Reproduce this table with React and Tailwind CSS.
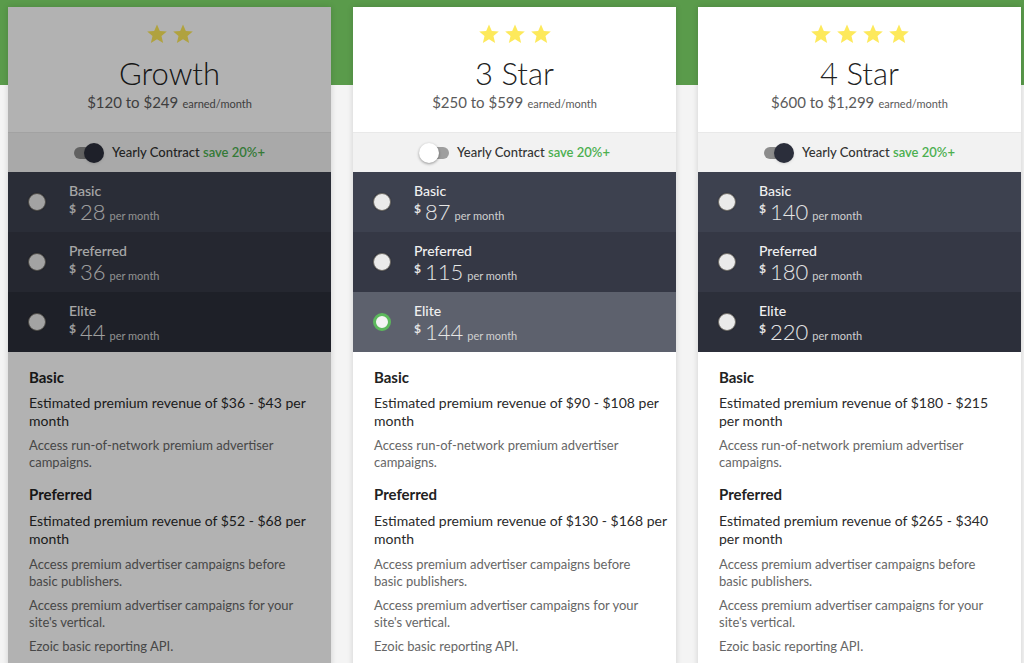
const plans = [
  {
    stars: 2,
    title: "Growth",
    range: "$120 to $249",
    yearly: true,
    disabled: true,
    prices: ["28", "36", "44"],
    selected: -1,
    basicRev: ["Estimated premium revenue of $36 - $43 per", "month"],
    prefRev: ["Estimated premium revenue of $52 - $68 per", "month"],
  },
  {
    stars: 3,
    title: "3 Star",
    range: "$250 to $599",
    yearly: false,
    prices: ["87", "115", "144"],
    selected: 2,
    basicRev: ["Estimated premium revenue of $90 - $108 per", "month"],
    prefRev: ["Estimated premium revenue of $130 - $168 per", "month"],
  },
  {
    stars: 4,
    title: "4 Star",
    range: "$600 to $1,299",
    yearly: true,
    prices: ["140", "180", "220"],
    selected: -1,
    basicRev: ["Estimated premium revenue of $180 - $215", "per month"],
    prefRev: ["Estimated premium revenue of $265 - $340", "per month"],
  },
];

const tiers = ["Basic", "Preferred", "Elite"];
const rowBg = ["bg-[#3d414f]", "bg-[#353845]", "bg-[#2c2f3a]"];

function Star() {
  return (
    <svg width="22" height="22" viewBox="0 0 24 24">
      <path
        d="M12 1.5l3.1 7.1 7.6.6-5.8 5 1.8 7.5L12 17.7l-6.7 4 1.8-7.5-5.8-5 7.6-.6z"
        fill="#fde95b"
      />
    </svg>
  );
}

function Toggle({ on }) {
  if (on) {
    return (
      <div className="relative w-[30px] h-[20px] flex items-center">
        <div className="w-[26px] h-[12px] rounded-full bg-[#8c8c8c]" />
        <div className="absolute right-0 top-0 w-[20px] h-[20px] rounded-full bg-[#2b2e3b] shadow" />
      </div>
    );
  }
  return (
    <div className="relative w-[30px] h-[20px] flex items-center justify-end">
      <div className="w-[26px] h-[12px] rounded-full bg-[#9e9e9e]" />
      <div className="absolute left-0 top-0 w-[20px] h-[20px] rounded-full bg-white shadow-[0_1px_3px_rgba(0,0,0,0.4)]" />
    </div>
  );
}

function Radio({ checked }) {
  if (checked) {
    return (
      <div className="w-[18px] h-[18px] rounded-full border-[3px] border-[#5cb85c] bg-[#f4f4f4]" />
    );
  }
  return (
    <div className="w-[18px] h-[18px] rounded-full bg-[#eaeaea] border border-[#6d6a66] shadow-[0_0_1px_rgba(0,0,0,0.6)]" />
  );
}

function Lines({ lines, className }) {
  return (
    <p className={className}>
      {lines.map((l) => (
        <span key={l} className="block whitespace-nowrap">
          {l}
        </span>
      ))}
    </p>
  );
}

function Card({ plan }) {
  return (
    <div className="relative w-[323px] shrink-0 bg-white shadow-[0_0_6px_rgba(0,0,0,0.15)] overflow-hidden">
      <div className="h-[125px] flex flex-col items-center pt-[16px]">
        <div className="flex gap-[4px] h-[22px]">
          {Array.from({ length: plan.stars }).map((_, i) => (
            <Star key={i} />
          ))}
        </div>
        <div className="mt-[9px] text-[31px] leading-[38px] font-light text-[#222]">
          {plan.title}
        </div>
        <div className="leading-[20px] text-[#5a5a5a]">
          <span className="text-[15px]">{plan.range}</span>{" "}
          <span className="text-[11px]">earned/month</span>
        </div>
      </div>

      <div className="h-[40px] bg-[#f2f2f2] border-t border-[#e9e9e9] flex items-center justify-center gap-[8px]">
        <Toggle on={plan.yearly} />
        <span className="text-[13px] font-medium text-[#333] pt-[1px]">
          Yearly Contract{" "}
          <span className="text-[#4caf50] font-semibold">save 20%+</span>
        </span>
      </div>

      {tiers.map((t, i) => (
        <div
          key={t}
          className={`h-[60px] flex items-center pl-[20px] gap-[23px] ${
            plan.selected === i ? "bg-[#5d616d]" : rowBg[i]
          }`}
        >
          <Radio checked={plan.selected === i} />
          <div className="flex flex-col pt-[5px]">
            <span className="text-[14px] leading-[18px] font-medium text-[#f0f0f0]">
              {t}
            </span>
            <span className="leading-[24px] text-[#e6e6e6] flex items-baseline">
              <span className="text-[12px] font-bold self-start leading-[18px] mr-[4px]">$</span>
              <span className="text-[22px] font-light">{plan.prices[i]}</span>
              <span className="text-[11px] ml-[4px] text-[#d0d0d0]">per month</span>
            </span>
          </div>
        </div>
      ))}

      <div className="px-[21px] pt-[15px] pb-10 text-[#2a2a2a]">
        <h3 className="text-[15px] leading-[20px] font-bold text-[#222]">Basic</h3>
        <Lines lines={plan.basicRev} className="mt-[7px] text-[14px] leading-[18px]" />
        <Lines
          lines={["Access run-of-network premium advertiser", "campaigns."]}
          className="mt-[7px] text-[13px] leading-[17px] text-[#666]"
        />
        <h3 className="mt-[13px] text-[15px] leading-[20px] font-bold text-[#222]">Preferred</h3>
        <Lines lines={plan.prefRev} className="mt-[8px] text-[14px] leading-[18px]" />
        <Lines
          lines={["Access premium advertiser campaigns before", "basic publishers."]}
          className="mt-[8px] text-[13px] leading-[17px] text-[#666]"
        />
        <Lines
          lines={["Access premium advertiser campaigns for your", "site's vertical."]}
          className="mt-[7px] text-[13px] leading-[17px] text-[#666]"
        />
        <p className="mt-[7px] text-[13px] leading-[17px] text-[#666]">
          Ezoic basic reporting API.
        </p>
      </div>

      {plan.disabled && (
        <div className="absolute inset-0 bg-black/30 pointer-events-none" />
      )}
    </div>
  );
}

export default function App() {
  return (
    <div className="min-h-screen h-[663px] overflow-hidden font-[Lato,sans-serif] bg-[linear-gradient(to_bottom,#5a9b4b_85px,#f4f4f4_85px)]">
      <div className="flex gap-[22px] pl-[8px] pt-[7px]">
        {plans.map((p) => (
          <Card key={p.title} plan={p} />
        ))}
      </div>
    </div>
  );
}
